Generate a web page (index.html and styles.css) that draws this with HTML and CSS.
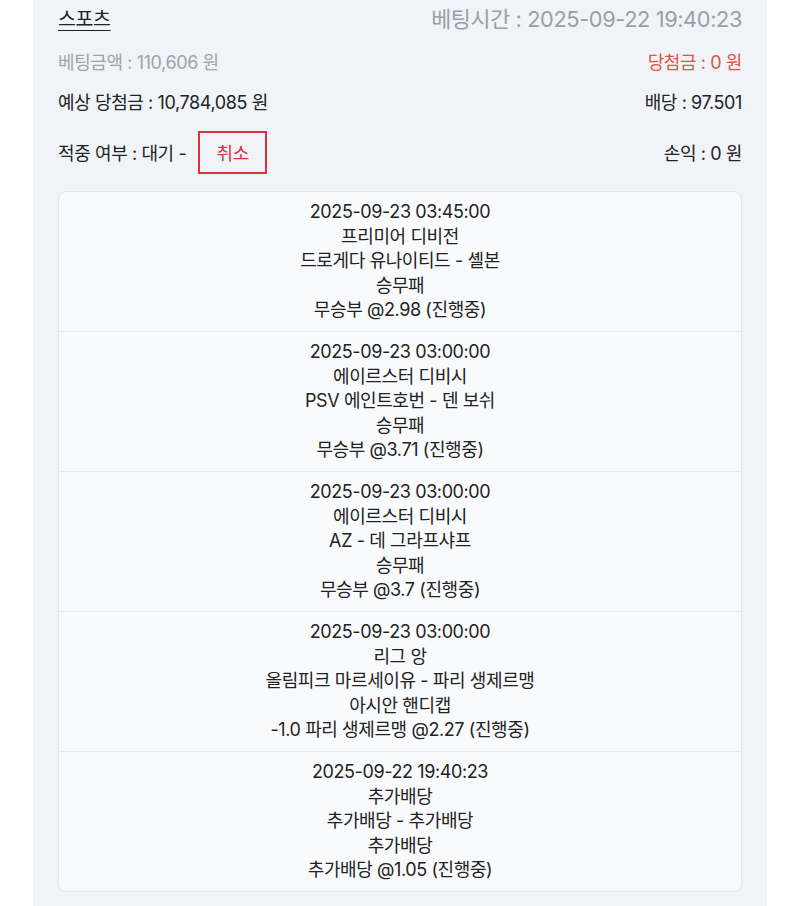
FILE: index.html
```html
<!DOCTYPE html>
<html lang="ko">
<head>
  <meta charset="UTF-8">
  <meta name="viewport" content="width=device-width, initial-scale=1.0">
  <title>베팅 내역</title>
  <link rel="stylesheet" href="styles.css">
</head>
<body>
  <div class="panel">
    <div class="row head-row">
      <span class="category">스포츠</span>
      <span class="time">베팅시간 : 2025-09-22 19:40:23</span>
    </div>
    <div class="row amount-row">
      <span class="muted">베팅금액 : 110,606 원</span>
      <span class="win">당첨금 : 0 원</span>
    </div>
    <div class="row">
      <span>예상 당첨금 : 10,784,085 원</span>
      <span>배당 : 97.501</span>
    </div>
    <div class="row status-row">
      <span class="status">적중 여부 : 대기 - <button class="cancel-btn">취소</button></span>
      <span>손익 : 0 원</span>
    </div>

    <!-- 베팅 상세 -->
    <div class="bet-list">
      <div class="bet">
        <div>2025-09-23 03:45:00</div>
        <div>프리미어 디비전</div>
        <div>드로게다 유나이티드 - 셸본</div>
        <div>승무패</div>
        <div>무승부 @2.98 (진행중)</div>
      </div>
      <div class="bet">
        <div>2025-09-23 03:00:00</div>
        <div>에이르스터 디비시</div>
        <div>PSV 에인트호번 - 덴 보쉬</div>
        <div>승무패</div>
        <div>무승부 @3.71 (진행중)</div>
      </div>
      <div class="bet">
        <div>2025-09-23 03:00:00</div>
        <div>에이르스터 디비시</div>
        <div>AZ - 데 그라프샤프</div>
        <div>승무패</div>
        <div>무승부 @3.7 (진행중)</div>
      </div>
      <div class="bet">
        <div>2025-09-23 03:00:00</div>
        <div>리그 앙</div>
        <div>올림피크 마르세이유 - 파리 생제르맹</div>
        <div>아시안 핸디캡</div>
        <div>-1.0 파리 생제르맹 @2.27 (진행중)</div>
      </div>
      <div class="bet">
        <div>2025-09-22 19:40:23</div>
        <div>추가배당</div>
        <div>추가배당 - 추가배당</div>
        <div>추가배당</div>
        <div>추가배당 @1.05 (진행중)</div>
      </div>
    </div>
  </div>
</body>
</html>
```

FILE: styles.css
```css
body {
  margin: 0;
  background: #ffffff;
  font-family: Inter, "Noto Sans CJK KR", sans-serif;
  color: #222222;
  font-size: 18px;
}

.panel {
  margin: 0 33px;
  padding: 0 25px 14px;
  background: #f0f3f8;
  min-height: 906px;
  box-sizing: border-box;
  letter-spacing: -0.4px;
}

.row {
  display: flex;
  justify-content: space-between;
  align-items: center;
  height: 30px;
}

.head-row {
  height: 38px;
  margin-top: -2px;
}

.amount-row {
  height: 50px;
}

.category {
  font-size: 19.5px;
  text-decoration: underline;
  text-underline-offset: 4px;
}

.time {
  font-size: 21.8px;
  color: #9a9ea6;
}

.muted {
  color: #9fa3aa;
}

.win {
  color: #e0533f;
}

.status-row {
  height: 72px;
}

.status {
  display: flex;
  align-items: center;
}

.cancel-btn {
  margin-left: 12px;
  width: 69px;
  height: 43px;
  background: transparent;
  border: 2px solid #d8343b;
  color: #d8343b;
  font-family: inherit;
  font-size: 18px;
  letter-spacing: -0.4px;
  cursor: pointer;
}

.bet-list {
  margin-top: 3px;
  background: #f9fafc;
  border: 1px solid #e2e5ea;
  border-radius: 8px;
}

.bet {
  text-align: center;
  line-height: 24.5px;
  padding: 8.25px 0;
  border-bottom: 1px solid #e5e8ec;
}

.bet:last-child {
  border-bottom: none;
}
```
